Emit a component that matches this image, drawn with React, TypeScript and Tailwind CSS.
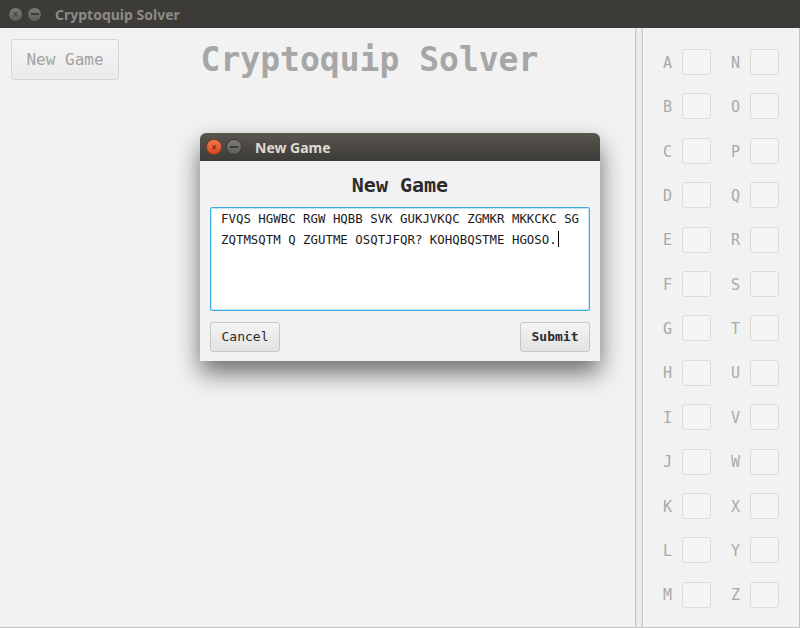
const mono = { fontFamily: '"DejaVu Sans Mono", "Liberation Mono", monospace' };

const LEFT = "ABCDEFGHIJKLM".split("");
const RIGHT = "NOPQRSTUVWXYZ".split("");

const WinButtons = ({ active }: { active: boolean }) => (
  <div className="flex items-center gap-[4px]">
    <div
      className={
        active
          ? "flex h-[16px] w-[16px] items-center justify-center rounded-full border border-[#8a3a1c] bg-gradient-to-b from-[#f47a4e] to-[#d9461d] text-[10px] leading-none text-[#5a1a08]"
          : "flex h-[15px] w-[15px] items-center justify-center rounded-full border border-[#3a3935] bg-gradient-to-b from-[#7b7a75] to-[#5d5c57] text-[10px] leading-none text-[#3c3b37]"
      }
    >
      ×
    </div>
    <div
      className={
        active
          ? "flex h-[16px] w-[16px] items-center justify-center rounded-full border border-[#3a3935] bg-gradient-to-b from-[#7d7c77] to-[#5e5d58]"
          : "flex h-[15px] w-[15px] items-center justify-center rounded-full border border-[#3a3935] bg-gradient-to-b from-[#7b7a75] to-[#5d5c57]"
      }
    >
      <div className="h-[2px] w-[8px] bg-[#3c3b37]" />
    </div>
  </div>
);

const LetterRow = ({ ch }: { ch: string }) => (
  <div className="flex h-[25px] items-center">
    <span className="w-[19px] translate-y-[1px] text-[15px] text-[#a9a9a9]" style={mono}>
      {ch}
    </span>
    <div className="h-[26px] w-[29px] rounded-[3px] border border-[#dcdcdc] bg-[#f5f5f5]" />
  </div>
);

export default function App() {
  return (
    <div className="relative h-[628px] w-[800px] overflow-hidden bg-[#f2f2f2]">
      {/* main window title bar */}
      <div className="flex h-[28px] items-center bg-[#3c3b37] pl-[8px]">
        <WinButtons active={false} />
        <span
          className="ml-[13px] text-[14px] font-bold text-[#8c8a85]"
          style={{ fontFamily: '"Noto Sans", "Open Sans", sans-serif' }}
        >
          Cryptoquip Solver
        </span>
      </div>

      <div className="flex h-[600px] border-r border-b border-[#c4c4c4]">
        {/* left area */}
        <div className="w-[635px] px-[11px] pt-[11px]">
          <div className="flex items-start">
            <div
              className="flex h-[41px] w-[108px] items-center justify-center rounded-[3px] border border-[#d6d6d6] bg-gradient-to-b from-[#f4f4f4] to-[#ebebeb] text-[16px] text-[#a3a3a3]"
              style={mono}
            >
              New Game
            </div>
            <div
              className="flex-1 pr-[4px] text-center text-[33px] font-bold leading-[41px] text-[#a6a6a6]"
              style={mono}
            >
              Cryptoquip Solver
            </div>
          </div>
        </div>

        {/* divider */}
        <div className="w-[8px] border-x border-[#c8c8c8] bg-gradient-to-r from-[#e4e4e4] via-[#f0f0f0] to-[#e4e4e4]" />

        {/* letters panel */}
        <div className="flex flex-1 gap-[20px] pl-[20px] pt-[21.5px]">
          <div className="flex flex-col gap-[19.4px]">
            {LEFT.map((c) => (
              <LetterRow key={c} ch={c} />
            ))}
          </div>
          <div className="flex flex-col gap-[19.4px]">
            {RIGHT.map((c) => (
              <LetterRow key={c} ch={c} />
            ))}
          </div>
        </div>
      </div>

      {/* dialog */}
      <div className="absolute left-[200px] top-[133px] flex h-[228px] w-[400px] flex-col overflow-hidden rounded-t-[6px] bg-[#f2f2f2] shadow-[0_12px_24px_rgba(0,0,0,0.55)]">
        <div className="flex h-[28px] items-center bg-gradient-to-b from-[#5a5650] to-[#3c3b37] pl-[6px]">
          <WinButtons active={true} />
          <span
            className="ml-[13px] text-[14px] font-bold text-[#dfdbd2]"
            style={{ fontFamily: '"Noto Sans", "Open Sans", sans-serif' }}
          >
            New Game
          </span>
        </div>
        <div className="flex flex-1 flex-col px-[10px] pt-[12px]">
          <div
            className="text-center text-[20px] font-bold leading-[24px] text-[#2b2b2b]"
            style={mono}
          >
            New Game
          </div>
          <div className="mt-[10px] h-[104px] rounded-[2px] border border-[#3cafe0] bg-white px-[10px] pt-[2px] shadow-[inset_0_0_0_1px_#bfe4f5]">
            <div
              className="whitespace-pre text-[12.4px] leading-[18px] text-[#1a1a1a]"
              style={mono}
            >
              <div>FVQS HGWBC RGW HQBB SVK GUKJVKQC ZGMKR MKKCKC SG</div>
              <div>
                ZQTMSQTM Q ZGUTME OSQTJFQR? KOHQBQSTME HGOSO.
                <span className="ml-[1px] inline-block h-[16px] w-[1px] translate-y-[3px] bg-black" />
              </div>
            </div>
          </div>
          <div className="mt-[11px] flex justify-between">
            <div
              className="flex h-[30px] w-[70px] items-center justify-center rounded-[3px] border border-[#c6c6c6] bg-gradient-to-b from-[#f4f4f4] to-[#e2e2e2] text-[13px] text-[#2b2b2b]"
              style={mono}
            >
              Cancel
            </div>
            <div
              className="flex h-[30px] w-[70px] items-center justify-center rounded-[3px] border border-[#c6c6c6] bg-gradient-to-b from-[#f4f4f4] to-[#e2e2e2] text-[13px] font-bold text-[#2b2b2b]"
              style={mono}
            >
              Submit
            </div>
          </div>
        </div>
      </div>
    </div>
  );
}
